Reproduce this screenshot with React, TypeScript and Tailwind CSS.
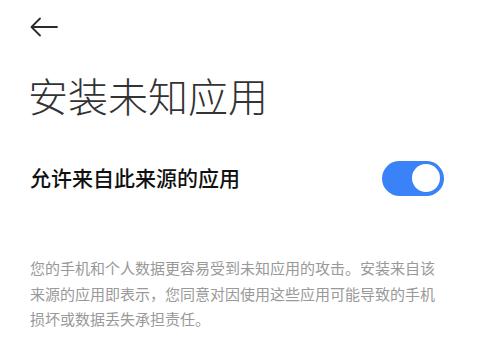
import { useState } from 'react';

const cjk = '"Noto Sans CJK SC", "Noto Sans", sans-serif';

export default function App() {
  const [enabled, setEnabled] = useState(true);

  return (
    <div className="w-[480px] h-[363px] bg-white overflow-hidden flex flex-col" style={{ fontFamily: cjk }}>
      {/* Header */}
      <div className="h-[54px] flex items-center pl-[30px]">
        <svg width="28" height="20" viewBox="0 0 28 20" fill="none" stroke="#2b2b2b" strokeWidth="1.8" strokeLinecap="round" strokeLinejoin="round">
          <path d="M27 10H2" />
          <path d="M10 1.5L1.5 10L10 18.5" />
        </svg>
      </div>

      {/* Title */}
      <h1 className="mt-[17px] pl-[28px] text-[40px] leading-[48px] font-light text-[#333333]">
        安装未知应用
      </h1>

      {/* Toggle row */}
      <div className="mt-[24px] h-[70px] flex items-center justify-between pl-[30px] pr-[36px]">
        <span className="text-[21px] font-medium text-[#111111]">允许来自此来源的应用</span>
        <button
          onClick={() => setEnabled(!enabled)}
          className={`w-[62px] h-[35px] rounded-full flex items-center px-[4px] ${enabled ? 'bg-[#3a82f7] justify-end' : 'bg-[#d9d9d9] justify-start'}`}
        >
          <span className="w-[28px] h-[28px] rounded-full bg-white" />
        </button>
      </div>

      {/* Description */}
      <p className="mt-[42px] ml-[30px] w-[412px] text-[15px] leading-[25.5px] text-[#999999]">
        您的手机和个人数据更容易受到未知应用的攻击。安装来自该来源的应用即表示，您同意对因使用这些应用可能导致的手机损坏或数据丢失承担责任。
      </p>
    </div>
  );
}
